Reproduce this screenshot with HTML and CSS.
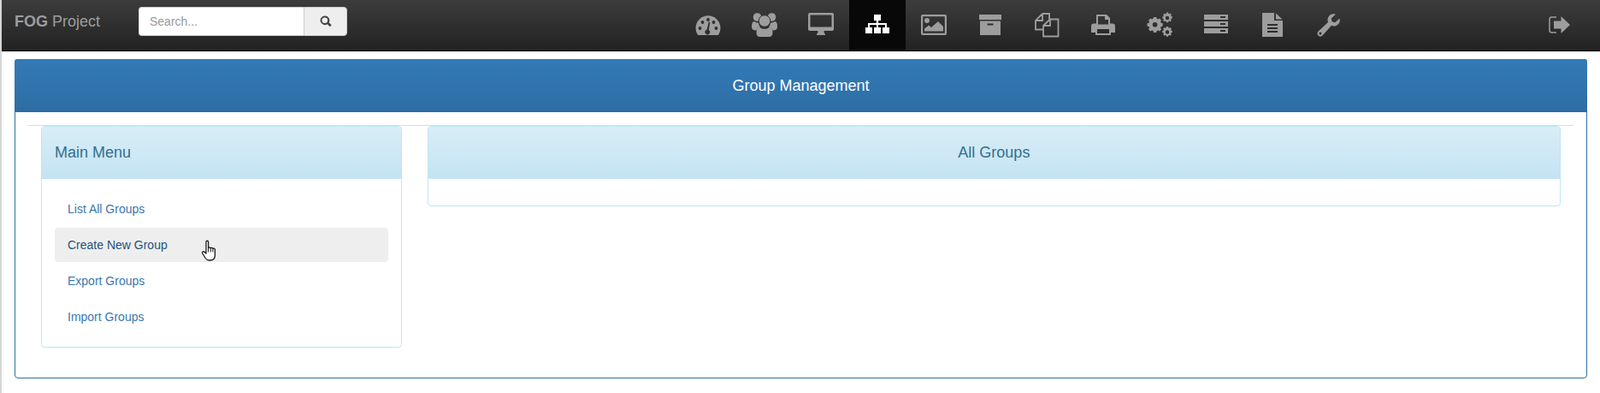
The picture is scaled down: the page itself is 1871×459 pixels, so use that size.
FILE: index.html
```html
<!DOCTYPE html>
<html lang="en">
<head>
<meta charset="utf-8">
<title>FOG Project - Group Management</title>
<link rel="stylesheet" href="styles.css">
</head>
<body>
<div class="page">
  <nav class="navbar">
    <a class="brand"><b>FOG</b> Project</a>
    <form class="search">
      <input class="search-input" type="text" placeholder="Search...">
      <span class="search-btn">
        <svg class="search-icon" viewBox="0 0 14 14"><path d="M5.8 0.5a5.3 5.3 0 1 0 3 9.7l3 3 1.900-1.900-3-3a5.300 5.300 0 0 0-4.900-7.800zm0 2a3.300 3.300 0 1 1 0 6.600 3.300 3.300 0 0 1 0-6.600z"/></svg>
      </span>
    </form>
    <ul class="icons">
      <li><svg class="ico" viewBox="0 0 30 30"><path d="M3 27A14.500 14.500 0 1 1 27 27z"/><g class="hole"><circle cx="5.500" cy="19" r="1.900"/><circle cx="8.500" cy="12" r="1.900"/><circle cx="15" cy="9" r="1.900"/><circle cx="24.500" cy="19" r="1.900"/><circle cx="21.500" cy="12" r="1.900"/><path d="M15.800 11.500l1.500.4-1.400 9a3 3 0 1 1-2.200-.4z"/></g></svg></li>
      <li><svg class="ico" viewBox="0 0 30 30"><circle cx="6.500" cy="6" r="4.800"/><circle cx="23.500" cy="6" r="4.800"/><path d="M0 17c0-4 1-6 3-6 1 1 3 1.800 5 1.500 0 2 .8 3.600 2 4.800-2.500.8-4 2.300-4.600 4.200C2 21.500 0 20.500 0 17zM30 17c0-4-1-6-3-6-1 1-3 1.800-5 1.500 0 2-.8 3.600-2 4.800 2.500.8 4 2.300 4.600 4.200C28 21.500 30 20.500 30 17z"/><circle class="gap" cx="15" cy="10.500" r="6.800"/><path d="M9 17.500c1.500 1.500 3.500 2.300 6 2.300s4.500-.8 6-2.300c2.300.5 3.500 3 3.500 6.500 0 3.200-1.500 5-4 5H9.500c-2.500 0-4-1.800-4-5 0-3.500 1.200-6 3.500-6.500z"/></svg></li>
      <li><svg class="ico" viewBox="0 0 30 30"><path fill-rule="evenodd" d="M2 1h26a2 2 0 0 1 2 2v17a2 2 0 0 1-2 2H18.500c0 2 .5 3 1.500 4v1H10v-1c1-1 1.500-2 1.500-4H2a2 2 0 0 1-2-2V3a2 2 0 0 1 2-2zm.5 2.500v14h25v-14z"/></svg></li>
      <li class="active"><svg class="ico" viewBox="0 0 30 30"><path d="M11 3h8v7h-2.800v3H26v5h3v7h-8v-7h3v-3h-8v3h3v7h-8v-7h3v-3H6v3h3v7H1v-7h3v-5h9.800v-3H11z"/></svg></li>
      <li><svg class="ico" viewBox="0 0 30 30"><path fill-rule="evenodd" d="M2 3h26a2 2 0 0 1 2 2v20a2 2 0 0 1-2 2H2a2 2 0 0 1-2-2V5a2 2 0 0 1 2-2zm.2 2.200v19.600h25.600V5.200z"/><circle cx="7" cy="10" r="3"/><path d="M4 22.500v-3l5-4 3 2.500 8-7 6 6v5.500z"/></svg></li>
      <li><svg class="ico" viewBox="0 0 30 30"><path fill-rule="evenodd" d="M2 3h26v6H2zM3 10.500h24V27H3zm8.500 3v2h7v-2z"/></svg></li>
      <li><svg class="ico" viewBox="0 0 30 30"><path class="line" stroke-width="1.800" d="M10 2h8v6.500M10 2L2 10v10.500h9.500M10 2v8H2M19 8.500l-8 7.500v12.500h17.500V8.500zM19 8.500V16h-8"/></svg></li>
      <li><svg class="ico" viewBox="0 0 30 30"><path fill-rule="evenodd" d="M7 3h12l4 4v6.500h3c2 0 3 1.200 3 3V24h-5v3H6v-3H1v-7.500c0-2 1-3 3-3h3zm2 2v9.500h12V9h-4V5zM8 20v5h14v-5z"/></svg></li>
      <li><svg class="ico" viewBox="0 0 30 30"><path transform="translate(0 2.300) scale(.8) translate(0 -5)" fill-rule="evenodd" d="M10 9.500h4l.6 2.400 1.900.8 2.100-1.300 2.800 2.800-1.300 2.100.8 1.900 2.400.6v4l-2.400.6-.8 1.900 1.300 2.100-2.800 2.800-2.100-1.300-1.900.8-.6 2.400h-4l-.6-2.400-1.900-.8-2.100 1.300-2.800-2.800 1.300-2.100-.8-1.900-2.400-.6v-4l2.400-.6.8-1.900-1.300-2.100 2.800-2.800 2.100 1.300 1.900-.8zm2 7.500a3.500 3.500 0 1 0 0 7 3.500 3.500 0 0 0 0-7z"/><path transform="translate(4.300 .1) scale(.85)" fill-rule="evenodd" d="M22 0.500h2.400l.3 1.500 1.200.5 1.300-.8 1.700 1.700-.8 1.300.5 1.200 1.400.3v2.400l-1.400.3-.5 1.200.8 1.300-1.700 1.700-1.300-.8-1.200.5-.3 1.500H22l-.3-1.500-1.200-.5-1.300.8-1.700-1.700.8-1.300-.5-1.200-1.400-.3V6.400l1.400-.3.5-1.200-.8-1.300L19.200 1.900l1.300.8 1.200-.5zm1.200 5a2.600 2.600 0 1 0 0 5.200 2.600 2.600 0 0 0 0-5.200z"/><path transform="translate(4.300 3.900) scale(.85)" fill-rule="evenodd" d="M22 15.500h2.400l.3 1.500 1.200.5 1.300-.8 1.700 1.700-.8 1.300.5 1.200 1.400.3v2.400l-1.400.3-.5 1.200.8 1.300-1.700 1.700-1.300-.8-1.200.5-.3 1.500H22l-.3-1.500-1.200-.5-1.300.8-1.700-1.700.8-1.300-.5-1.200-1.400-.3v-2.400l1.400-.3.500-1.200-.8-1.300 1.700-1.700 1.300.8 1.200-.5zm1.200 5a2.600 2.600 0 1 0 0 5.200 2.600 2.600 0 0 0 0-5.200z"/></svg></li>
      <li><svg class="ico" viewBox="0 0 30 30"><path fill-rule="evenodd" d="M1 3h28v6H1zm19 2v2h6V5zM1 11h28v6H1zm19 2v2h6v-2zM1 19h28v6H1zm19 2v2h6v-2z"/></svg></li>
      <li><svg class="ico" viewBox="0 0 30 30"><path fill-rule="evenodd" d="M3 1h14v9h10v19H3zm6 13v2h12v-2zm0 4v2h12v-2zm0 4v2h12v-2z"/><path d="M19 1.500l7.500 7H19z"/></svg></li>
      <li><svg class="ico" viewBox="0 0 30 30"><path fill-rule="evenodd" d="M27.500 7.500c1 3.500-.5 7-4 8.500-2 .8-4 .6-5.500-.3L7.500 27.500c-1.500 1.500-3.500 1.500-5 0s-1.300-3.500.2-5L14 12c-.8-2-.7-4 .3-6 1.500-2.800 5-4.500 8.500-3.200l-5 4.700.7 3.800 3.800.9zM5 23.500a1.500 1.500 0 1 0 0 3 1.500 1.500 0 0 0 0-3z"/></svg></li>
    </ul>
    <a class="logout"><svg class="ico" viewBox="0 0 30 30"><path class="line" stroke-width="1.500" d="M12 6H6.500C5 6 4 7 4 8.500v13C4 23 5 24 6.500 24H12"/><path d="M17.500 5L28 15 17.500 25v-5.500H9v-9h8.500z"/></svg></a>
  </nav>
  <main class="content">
    <section class="panel panel-primary">
      <h2 class="panel-heading center">Group Management</h2>
      <div class="panel-main">
        <hr class="rule">
        <div class="columns">
          <div class="col-menu">
            <section class="panel panel-info">
              <h3 class="panel-heading">Main Menu</h3>
              <ul class="menu">
                <li><a>List All Groups</a></li>
                <li class="hover"><a>Create New Group</a>
                  <svg class="cursor" viewBox="0 0 20 26"><path fill="#fff" stroke="#1a1a1a" stroke-width="1.300" stroke-linejoin="round" d="M6 2.500c0-1.700 2.600-1.700 2.600 0v7.500c.2-1.600 2.600-1.600 2.700.2 0-1.300 2.500-1.300 2.600.5.300-1 2.400-.8 2.500.9v6.400c0 3.500-2 6-5.500 6H9.600c-2 0-3.200-.8-4.400-2.500L1.800 16c-1-1.500 1-3 2.300-1.700L6 16z"/><path fill="none" stroke="#1a1a1a" d="M8.600 10v4.500M11.300 10.400v4.100M13.900 11v3.500"/></svg>
                </li>
                <li><a>Export Groups</a></li>
                <li><a>Import Groups</a></li>
              </ul>
            </section>
          </div>
          <div class="col-main">
            <section class="panel panel-info">
              <h3 class="panel-heading center">All Groups</h3>
              <div class="panel-empty"></div>
            </section>
          </div>
        </div>
      </div>
    </section>
  </main>
</div>
</body>
</html>
```
FILE: styles.css
```css
* { box-sizing: border-box; }
html, body { margin: 0; padding: 0; height: 100%; background: #fff; }
body { font-family: "Liberation Sans", Arial, sans-serif; font-size: 14px; line-height: 20px; color: #333; overflow: hidden; }
.page { border-left: 2px solid #d6d6d6; min-height: 100%; }
.navbar { display: flex; align-items: flex-start; height: 60px; border-bottom: 1px solid #000; background: linear-gradient(#3c3c3c, #222); }
.brand { width: 146px; padding: 15px 0 0 15px; font-size: 18px; line-height: 20px; color: #9d9d9d; flex: none; }
.search { display: flex; width: 244px; height: 34px; margin: 8px 0 0 14px; flex: none; }
.search-input { width: 193px; height: 34px; border: 1px solid #ccc; border-right: 0; border-radius: 4px 0 0 4px; padding: 6px 12px; font: 14px/20px "Liberation Sans", Arial, sans-serif; color: #555; background: #fff; outline: 0; }
.search-input::placeholder { color: #999; opacity: 1; }
.search-btn { display: flex; align-items: center; justify-content: center; width: 51px; height: 34px; border: 1px solid #ccc; border-radius: 0 4px 4px 0; background: #eee; }
.search-icon { width: 14px; height: 14px; fill: #444; }
.icons { display: flex; list-style: none; margin: 0 0 0 389px; padding: 0; flex: none; }
.icons li { display: flex; align-items: flex-start; justify-content: center; width: 66px; height: 59px; padding-top: 14px; }
.ico { width: 30px; height: 30px; fill: #9d9d9d; }
.ico .hole { fill: #302f2f; }
.ico .gap { stroke: #2f2f2f; stroke-width: 1; }
.ico .line { stroke: #9d9d9d; fill: none; }
.icons li.active { background: #080808; }
.icons li.active .ico { fill: #fff; }
.logout { flex: none; margin: 14px 0 0 221px; height: 30px; }
.content { padding: 9px 15px 0; }
.panel { border-radius: 4px; background: #fff; border: 1px solid; }
.panel-heading { margin: 0; padding: 21px 15px; font-size: 18px; font-weight: 400; line-height: 20px; border-radius: 3px 3px 0 0; }
.center { text-align: center; }
.panel-primary { border-color: #2f6f9f; height: 373px; }
.panel-primary > .panel-heading { margin: -1px -1px 0; background: linear-gradient(#337ab7, #2e6da4); color: #fff; }
.panel-main { padding: 15px 15px 0; }
.rule { margin: 0; border: 0; border-top: 1px solid #ddd; }
.columns { display: flex; }
.col-menu { width: 25%; padding: 0 15px; flex: none; }
.col-main { width: 75%; padding: 0 15px; flex: none; }
.panel-info { border-color: #bce8f1; }
.panel-info > .panel-heading { padding: 20px 15px 21px; background: linear-gradient(#d9edf7, #c4e3f3); color: #31708f; }
.panel-empty { height: 31px; }
.menu { list-style: none; margin: 0; padding: 15px 15px 13px; }
.menu li { position: relative; height: 40px; margin-bottom: 2px; padding: 10px 15px; border-radius: 4px; color: #3a78ad; }
.menu li.hover { background: #eee; color: #23527c; }
.cursor { position: absolute; left: 171px; top: 14px; width: 20px; height: 26px; }
```
